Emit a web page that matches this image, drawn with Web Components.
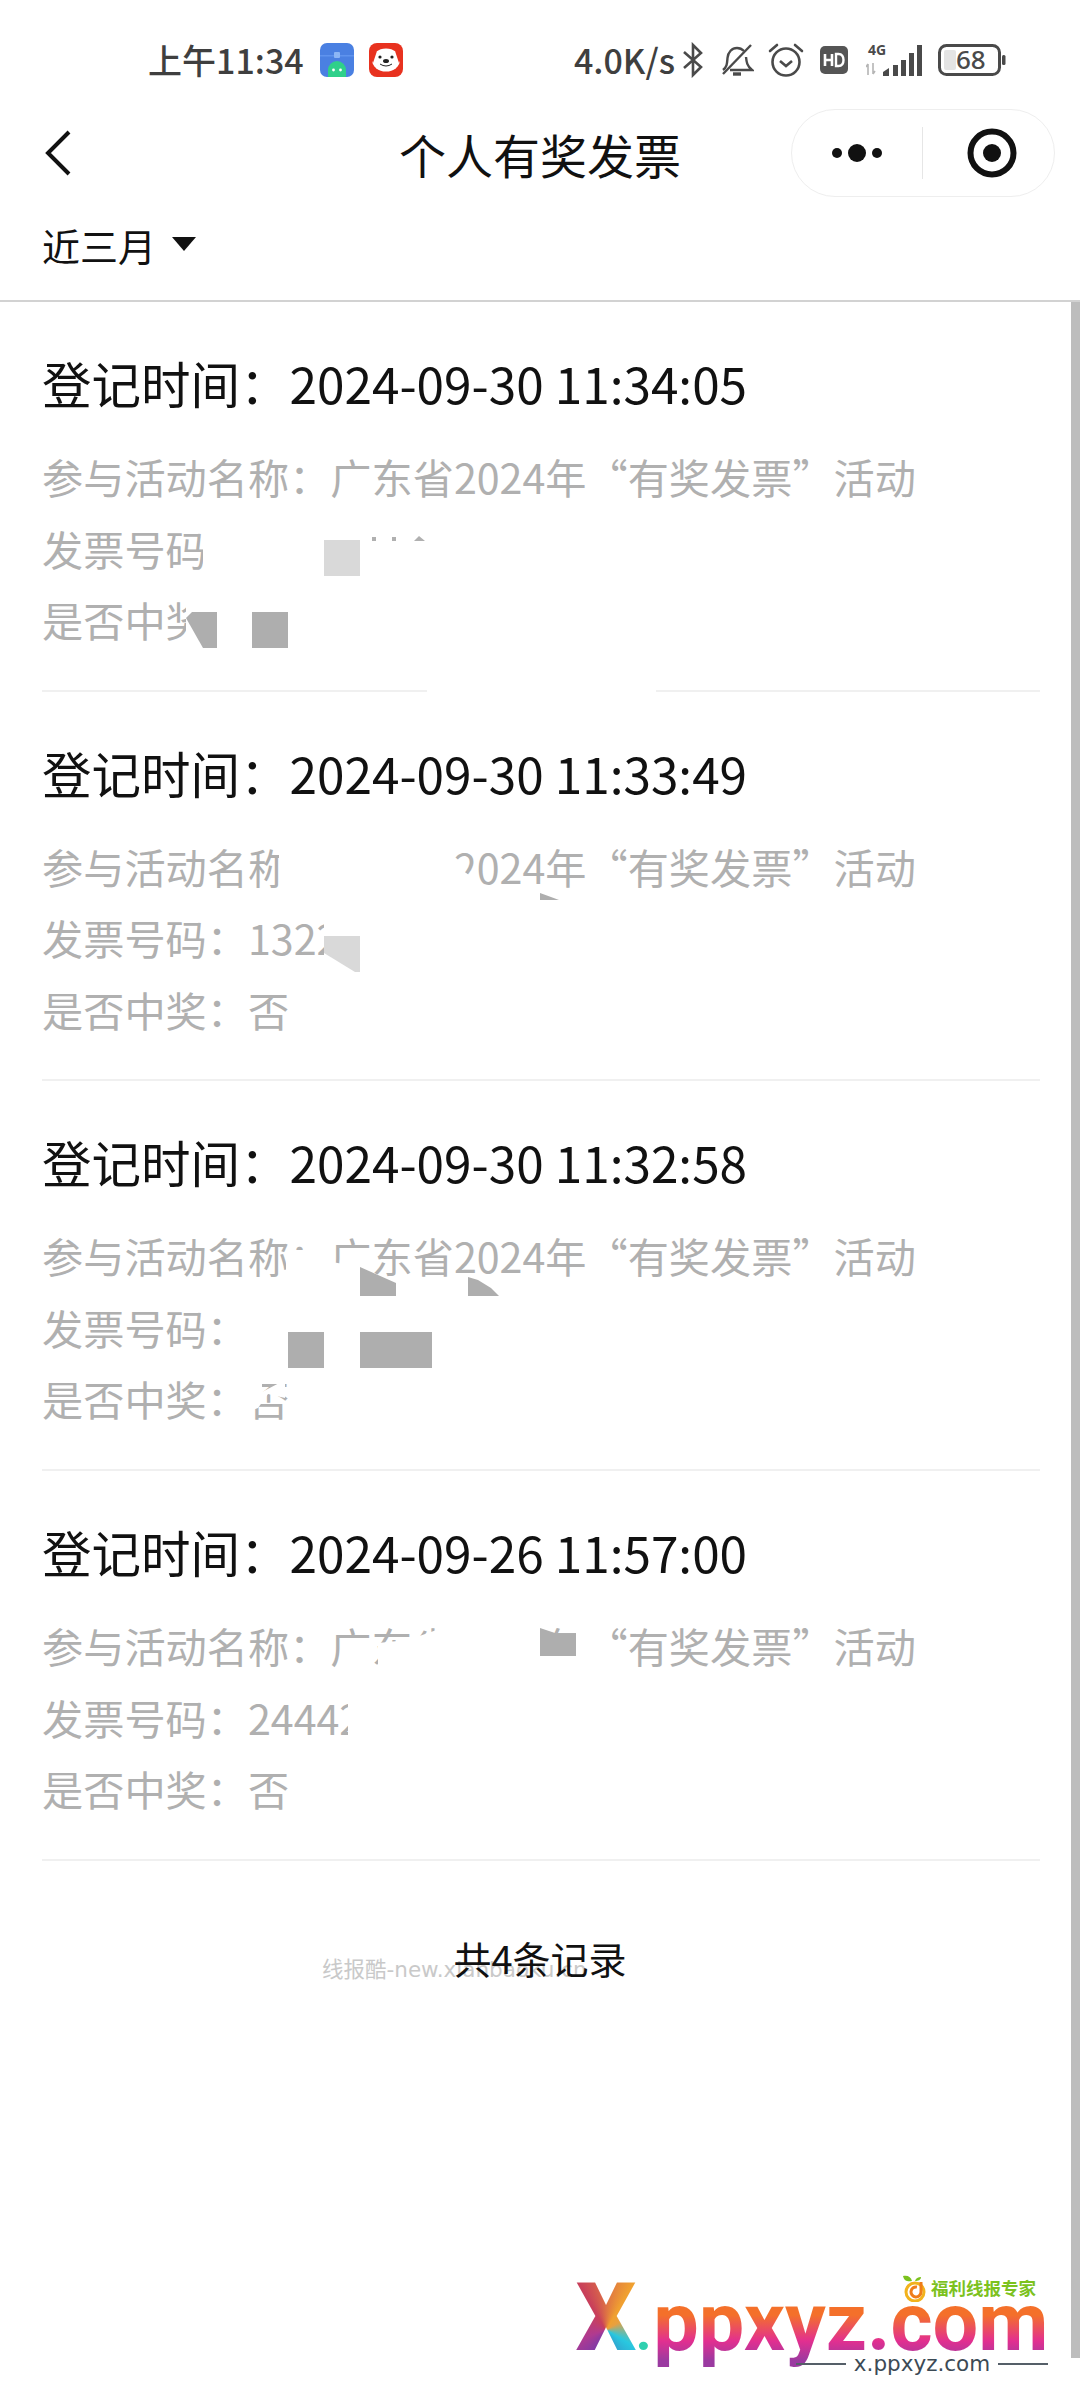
<!DOCTYPE html>
<html lang="zh-CN">
<head>
<meta charset="utf-8">
<title>个人有奖发票</title>
<style>
  html, body { margin: 0; padding: 0; background: #fff; }
  body { width: 1080px; height: 2400px; overflow: hidden; position: relative; font-family: "Noto Sans CJK SC", "Noto Sans", sans-serif; }
</style>
</head>
<body>
<status-bar></status-bar>
<mini-nav>个人有奖发票</mini-nav>
<filter-bar>近三月</filter-bar>
<record-list>
  <record-item time="2024-09-30 11:34:05">
    <span slot="name">参与活动名称：广东省2024年“有奖发票”活动</span>
    <span slot="code">发票号码：</span>
    <span slot="won">是否中奖：否</span>
  </record-item>
  <record-item time="2024-09-30 11:33:49">
    <span slot="name">参与活动名称：广东省2024年“有奖发票”活动</span>
    <span slot="code">发票号码：1322</span>
    <span slot="won">是否中奖：否</span>
  </record-item>
  <record-item time="2024-09-30 11:32:58">
    <span slot="name">参与活动名称：广东省2024年“有奖发票”活动</span>
    <span slot="code">发票号码：</span>
    <span slot="won">是否中奖：否</span>
  </record-item>
  <record-item time="2024-09-26 11:57:00">
    <span slot="name">参与活动名称：广东省2024年“有奖发票”活动</span>
    <span slot="code">发票号码：24442</span>
    <span slot="won">是否中奖：否</span>
  </record-item>
  <list-footer>共4条记录</list-footer>
</record-list>
<redaction-layer></redaction-layer>
<brand-mark></brand-mark>

<script>
const CJK = '"Noto Sans CJK SC", "Noto Sans", sans-serif';

class StatusBar extends HTMLElement {
  constructor() {
    super();
    this.attachShadow({ mode: "open" });
    this.shadowRoot.innerHTML = `
      <style>
        :host { display: flex; align-items: center; height: 108px; box-sizing: border-box; padding: 11px 74px 0 148px; color: #3f3f3f; font: 500 34px/40px ${CJK}; }
        .left, .right { display: flex; align-items: center; }
        .right { margin-left: auto; }
        .time { margin-right: 16px; }
        svg { display: block; flex: none; }
        .speed { margin-right: 7px; }
      </style>
      <div class="left">
        <span class="time">上午11:34</span>
        <svg width="34" height="34" viewBox="0 0 34 34">
          <rect width="34" height="34" rx="7" fill="#4a80e2"/>
          <rect x="0" y="12" width="34" height="1.5" fill="#5f93ee"/>
          <rect x="14" y="9" width="6" height="6" rx="1" fill="#8cb6f5"/>
          <path d="M8 34v-7a9 9 0 0 1 18 0v7z" fill="#2fd08a"/>
          <circle cx="13.5" cy="27" r="1.4" fill="#fff"/><circle cx="20.5" cy="27" r="1.4" fill="#fff"/>
        </svg>
        <svg style="margin-left:15px" width="34" height="34" viewBox="0 0 34 34">
          <rect width="34" height="34" rx="8" fill="#e8321f"/>
          <ellipse cx="17" cy="17" rx="14" ry="11.5" fill="#fff"/>
          <path d="M0 12 8 8 4 20zM34 12l-8-4 4 12z" fill="#e8321f"/>
          <circle cx="11" cy="14" r="1.6" fill="#222"/><circle cx="23" cy="14" r="1.6" fill="#222"/>
          <ellipse cx="17" cy="18" rx="3" ry="2" fill="#222"/>
          <path d="M11 21q6 4 12 0" fill="none" stroke="#222" stroke-width="1"/>
        </svg>
      </div>
      <div class="right">
        <span class="speed">4.0K/s</span>
        <svg width="22" height="36" viewBox="0 0 22 36" fill="none" stroke="#4a4a4a" stroke-width="2.6">
          <path d="M2 10 19 25 11 33V3l8 8L2 26"/>
        </svg>
        <svg style="margin-left:16px" width="34" height="34" viewBox="0 0 34 34" fill="none" stroke="#4a4a4a" stroke-width="2.4">
          <path d="M3 27c4-3 4-6 4.500-12C8 9 12 5 17 5c3 0 5 1 7 3M26 14c.5 5 1 9 6 13H10"/>
          <path d="M3 31 31 2"/>
          <path d="M13 31h8" stroke-width="3.4"/>
        </svg>
        <svg style="margin-left:14px" width="36" height="36" viewBox="0 0 36 36" fill="none" stroke="#4a4a4a" stroke-width="2.6">
          <circle cx="18" cy="20" r="13.5"/>
          <path d="M12 19l6 5 6-5"/>
          <path d="M2 9l7-6M34 9l-7-6" stroke-linecap="round"/>
        </svg>
        <svg style="margin-left:16px" width="28" height="28" viewBox="0 0 28 28">
          <rect width="28" height="28" rx="5" fill="#555"/>
          <path d="M5 8v12M12 8v12M5 14h7" stroke="#fff" stroke-width="2.6" fill="none"/>
          <path d="M16 8v12h2.500c3.500 0 5-2.500 5-6s-1.500-6-5-6z" stroke="#fff" stroke-width="2.4" fill="none"/>
        </svg>
        <svg style="margin-left:18px" width="56" height="34" viewBox="0 0 56 34">
          <text x="2" y="12" font-family="Noto Sans" font-weight="700" font-size="14" fill="#4a4a4a">4G</text>
          <path d="M2 32V21M0 24l2-3M7 20v11M7 31l2-3" stroke="#b5b5b5" stroke-width="1.6" fill="none"/>
          <path d="M17 33v-4l6-4v8zM27 33V22h5v11zM35 33V17h5v16zM43 33V10h5v23zM51 33V2h5v31z" fill="#4a4a4a"/>
        </svg>
        <svg style="margin-left:16px" width="68" height="32" viewBox="0 0 68 32">
          <rect x="1.5" y="1.5" width="60" height="29" rx="7" fill="#fff" stroke="#4a4a4a" stroke-width="3"/>
          <rect x="6" y="6" width="12" height="20" rx="2" fill="#e4e4e4"/>
          <text x="18" y="25" font-family="Noto Sans" font-size="26" fill="#4a4a4a">68</text>
          <rect x="64" y="11" width="3.5" height="10" rx="1.5" fill="#4a4a4a"/>
        </svg>
      </div>
    `;
  }
}

class MiniNav extends HTMLElement {
  constructor() {
    super();
    this.attachShadow({ mode: "open" });
    this.shadowRoot.innerHTML = `
      <style>
        :host { display: grid; grid-template-columns: 1fr auto 1fr; align-items: center; height: 90px; padding: 0 25px; color: #111; }
        .back { margin-left: 20px; }
        .title { font-size: 47px; line-height: 1; }
        .capsule { justify-self: end; display: flex; align-items: center; box-sizing: border-box; width: 264px; height: 88px; border: 1px solid #eee; border-radius: 44px; }
        .cell { flex: none; box-sizing: border-box; width: 130px; display: flex; justify-content: center; align-items: center; }
        .target { width: 131px; padding-left: 6px; }
        .line { width: 1px; height: 52px; background: #e6e6e6; }
      </style>
      <svg class="back" width="26" height="46" viewBox="0 0 26 46" fill="none" stroke="#111" stroke-width="4"><path d="M24 2 3 23l21 21"/></svg>
      <span class="title"><slot></slot></span>
      <div class="capsule">
        <div class="cell"><svg width="52" height="20" viewBox="0 0 52 20" fill="#111"><circle cx="6" cy="10" r="5"/><circle cx="26" cy="10" r="9"/><circle cx="46" cy="10" r="5"/></svg></div>
        <div class="line"></div>
        <div class="cell target"><svg width="50" height="50" viewBox="0 0 50 50"><circle cx="25" cy="25" r="21.5" fill="none" stroke="#111" stroke-width="6"/><circle cx="25" cy="25" r="9" fill="#111"/></svg></div>
      </div>
    `;
  }
}

class FilterBar extends HTMLElement {
  constructor() {
    super();
    this.attachShadow({ mode: "open" });
    this.shadowRoot.innerHTML = `
      <style>
        :host { display: flex; align-items: center; gap: 16px; box-sizing: border-box; height: 104px; padding: 0 42px 10px; border-bottom: 2px solid #d2d2d2; color: #111; font-size: 38px; }
        i { width: 0; height: 0; border: 12px solid transparent; border-top: 14px solid #111; border-bottom: 0; }
      </style>
      <span><slot></slot></span><i></i>
    `;
  }
}

class RecordList extends HTMLElement {
  constructor() {
    super();
    this.attachShadow({ mode: "open" });
    this.shadowRoot.innerHTML = `
      <style>
        :host { display: flex; flex-direction: column; position: relative; }
        /* scroll thumb sits over the list edge */
        .thumb { position: absolute; top: 0; right: 0; width: 9px; height: 2056px; background: #bdbdbd; }
      </style>
      <slot></slot><div class="thumb"></div>
    `;
  }
}

class RecordItem extends HTMLElement {
  constructor() {
    super();
    this.attachShadow({ mode: "open" });
    this.shadowRoot.innerHTML = `
      <style>
        :host { display: block; box-sizing: border-box; height: 389.7px; margin: 0 40px 0 42px; padding-top: 45px; border-bottom: 2px solid #f0f0f0; }
        .time { color: #111; font-size: 49.5px; line-height: 72px; margin-bottom: 22px; }
        .row { color: #b0b0b0; font-size: 41.2px; line-height: 71.5px; white-space: nowrap; }
      </style>
      <div class="time">登记时间：<span id="t"></span></div>
      <div class="row"><slot name="name"></slot></div>
      <div class="row"><slot name="code"></slot></div>
      <div class="row"><slot name="won"></slot></div>
    `;
  }

  connectedCallback() {
    this.shadowRoot.querySelector("#t").textContent = this.getAttribute("time");
  }
}

class ListFooter extends HTMLElement {
  constructor() {
    super();
    this.attachShadow({ mode: "open" });
    this.shadowRoot.innerHTML = `
      <style>
        :host { display: block; position: relative; padding-top: 63px; text-align: center; color: #111; font-size: 38px; line-height: 68px; }
        /* faint site stamp that lies under the footer text */
        .stamp { position: absolute; left: 322px; top: 96px; color: #c9c9c9; font: 21.5px/26px "DejaVu Sans", ${CJK}; white-space: nowrap; }
        span { position: relative; }
      </style>
      <div class="stamp">线报酷-new.xianbaoku.cn</div>
      <span><slot></slot></span>
    `;
  }
}

// white cuts and grey blocks laid over the records, in page coordinates
const COVERS = [
  // first record
  ["#fff", "203,525 470,525 470,580 203,580"],
  ["#b0b0b0", "372,537 376,537 376,541 372,541"],
  ["#b0b0b0", "392,537 396,537 396,541 392,541"],
  ["#b0b0b0", "414,541 419,536 425,541"],
  ["#d9d9d9", "324,540 360,540 360,576 324,576"],
  ["#fff", "186,598 300,598 300,655 186,655"],
  ["#aeaeae", "186,618 192,612 217,612 217,648 203,648"],
  ["#aeaeae", "252,612 288,612 288,648 252,648"],
  ["#fff", "427,684 656,684 656,694 427,694"],
  // second record
  ["#fff", "279,840 452,840 456,866 482,884 540,893 559,900 279,900"],
  ["#aeaeae", "540,893 551,897 559,900 540,900"],
  ["#fff", "324,920 420,920 420,975 324,975"],
  ["#d9d9d9", "324,936 360,936 360,972 355,972 324,953"],
  // third record
  ["#fff", "286,1250 322,1250 332,1262 360,1267 396,1283 396,1296 286,1296"],
  ["#aeaeae", "360,1267 396,1283 396,1296 360,1296"],
  ["#aeaeae", "468,1277 478,1280 491,1288 499,1296 468,1296"],
  ["#aeaeae", "288,1332 324,1332 324,1368 288,1368"],
  ["#aeaeae", "360,1332 432,1332 432,1368 360,1368"],
  ["#fff", "248,1380 262,1380 262,1392 285,1380 285,1398 268,1394 258,1408 248,1412"],
  // fourth record
  ["#fff", "378,1643 408,1640 448,1626 540,1626 540,1668 378,1668"],
  ["#fff", "540,1656 592,1656 592,1670 540,1670"],
  ["#fff", "576,1632 592,1632 592,1656 576,1656"],
  ["#aeaeae", "540,1628 558,1634 576,1634 576,1656 540,1656"],
  ["#fff", "348,1690 500,1690 500,1745 348,1745"],
];

class RedactionLayer extends HTMLElement {
  constructor() {
    super();
    this.attachShadow({ mode: "open" });
    const shapes = COVERS.map(([fill, pts]) => `<polygon fill="${fill}" points="${pts}"/>`).join("");
    this.shadowRoot.innerHTML = `
      <style>
        :host { position: absolute; inset: 0; pointer-events: none; }
        svg { display: block; }
      </style>
      <svg width="1080" height="2400" viewBox="0 0 1080 2400">${shapes}</svg>
    `;
  }
}

class BrandMark extends HTMLElement {
  constructor() {
    super();
    this.attachShadow({ mode: "open" });
    this.shadowRoot.innerHTML = `
      <style>
        :host { position: absolute; left: 576px; top: 2268px; width: 476px; height: 118px; font-family: Roboto, sans-serif; }
        .main { position: absolute; left: 0; top: 0; height: 100px; display: flex; align-items: baseline; white-space: nowrap; font-weight: 900; line-height: 100px; }
        .main span { -webkit-background-clip: text; background-clip: text; color: transparent; }
        .x { font-size: 94px; background: conic-gradient(from -30deg at 50% 62%, #c9405a, #f0a030 60deg, #e8a040 90deg, #28c8e0 150deg, #30a8d0 180deg, #6a3ab0 220deg, #b03a90 280deg, #c9405a); }
        .dot { font-size: 50px; background: #30d0b0; margin: 0 2px 0 0; }
        .rest { font-size: 81px; font-weight: 700; background: linear-gradient(180deg, #f4702a 0 42%, #e22f90 68%, #9a3aa0 88%); }
        .tag { position: absolute; left: 326px; top: 6px; display: flex; align-items: center; color: #7cc21e; font: 700 17.5px/1 "Noto Sans CJK SC", sans-serif; white-space: nowrap; }
        .tag svg { margin-right: 3px; }
        .sub { position: absolute; left: 220px; top: 82px; width: 252px; display: flex; align-items: center; gap: 8px; color: #3c4a55; font: 21.5px/28px "DejaVu Sans", sans-serif; white-space: nowrap; }
        .sub i { flex: 1; height: 2px; background: #555f68; }
      </style>
      <div class="main"><span class="x">X</span><span class="dot">.</span><span class="rest">ppxyz.com</span></div>
      <div class="tag">
        <svg width="26" height="28" viewBox="0 0 26 28">
          <path d="M1 2c5-1 8 1 9 5-4 1-8 0-9-5zM13 7c1-3 3-4 6-4 0 3-3 4-6 4z" fill="#7cc21e"/>
          <circle cx="13" cy="18" r="9" fill="none" stroke="#f2b21c" stroke-width="3"/>
          <path d="M19 8v10a5 5 0 1 1-4-5" fill="none" stroke="#ef7d1a" stroke-width="3"/>
        </svg>
        福利线报专家
      </div>
      <div class="sub"><i></i>x.ppxyz.com<i></i></div>
    `;
  }
}

customElements.define("status-bar", StatusBar);
customElements.define("mini-nav", MiniNav);
customElements.define("filter-bar", FilterBar);
customElements.define("record-list", RecordList);
customElements.define("record-item", RecordItem);
customElements.define("list-footer", ListFooter);
customElements.define("redaction-layer", RedactionLayer);
customElements.define("brand-mark", BrandMark);
</script>
</body>
</html>
